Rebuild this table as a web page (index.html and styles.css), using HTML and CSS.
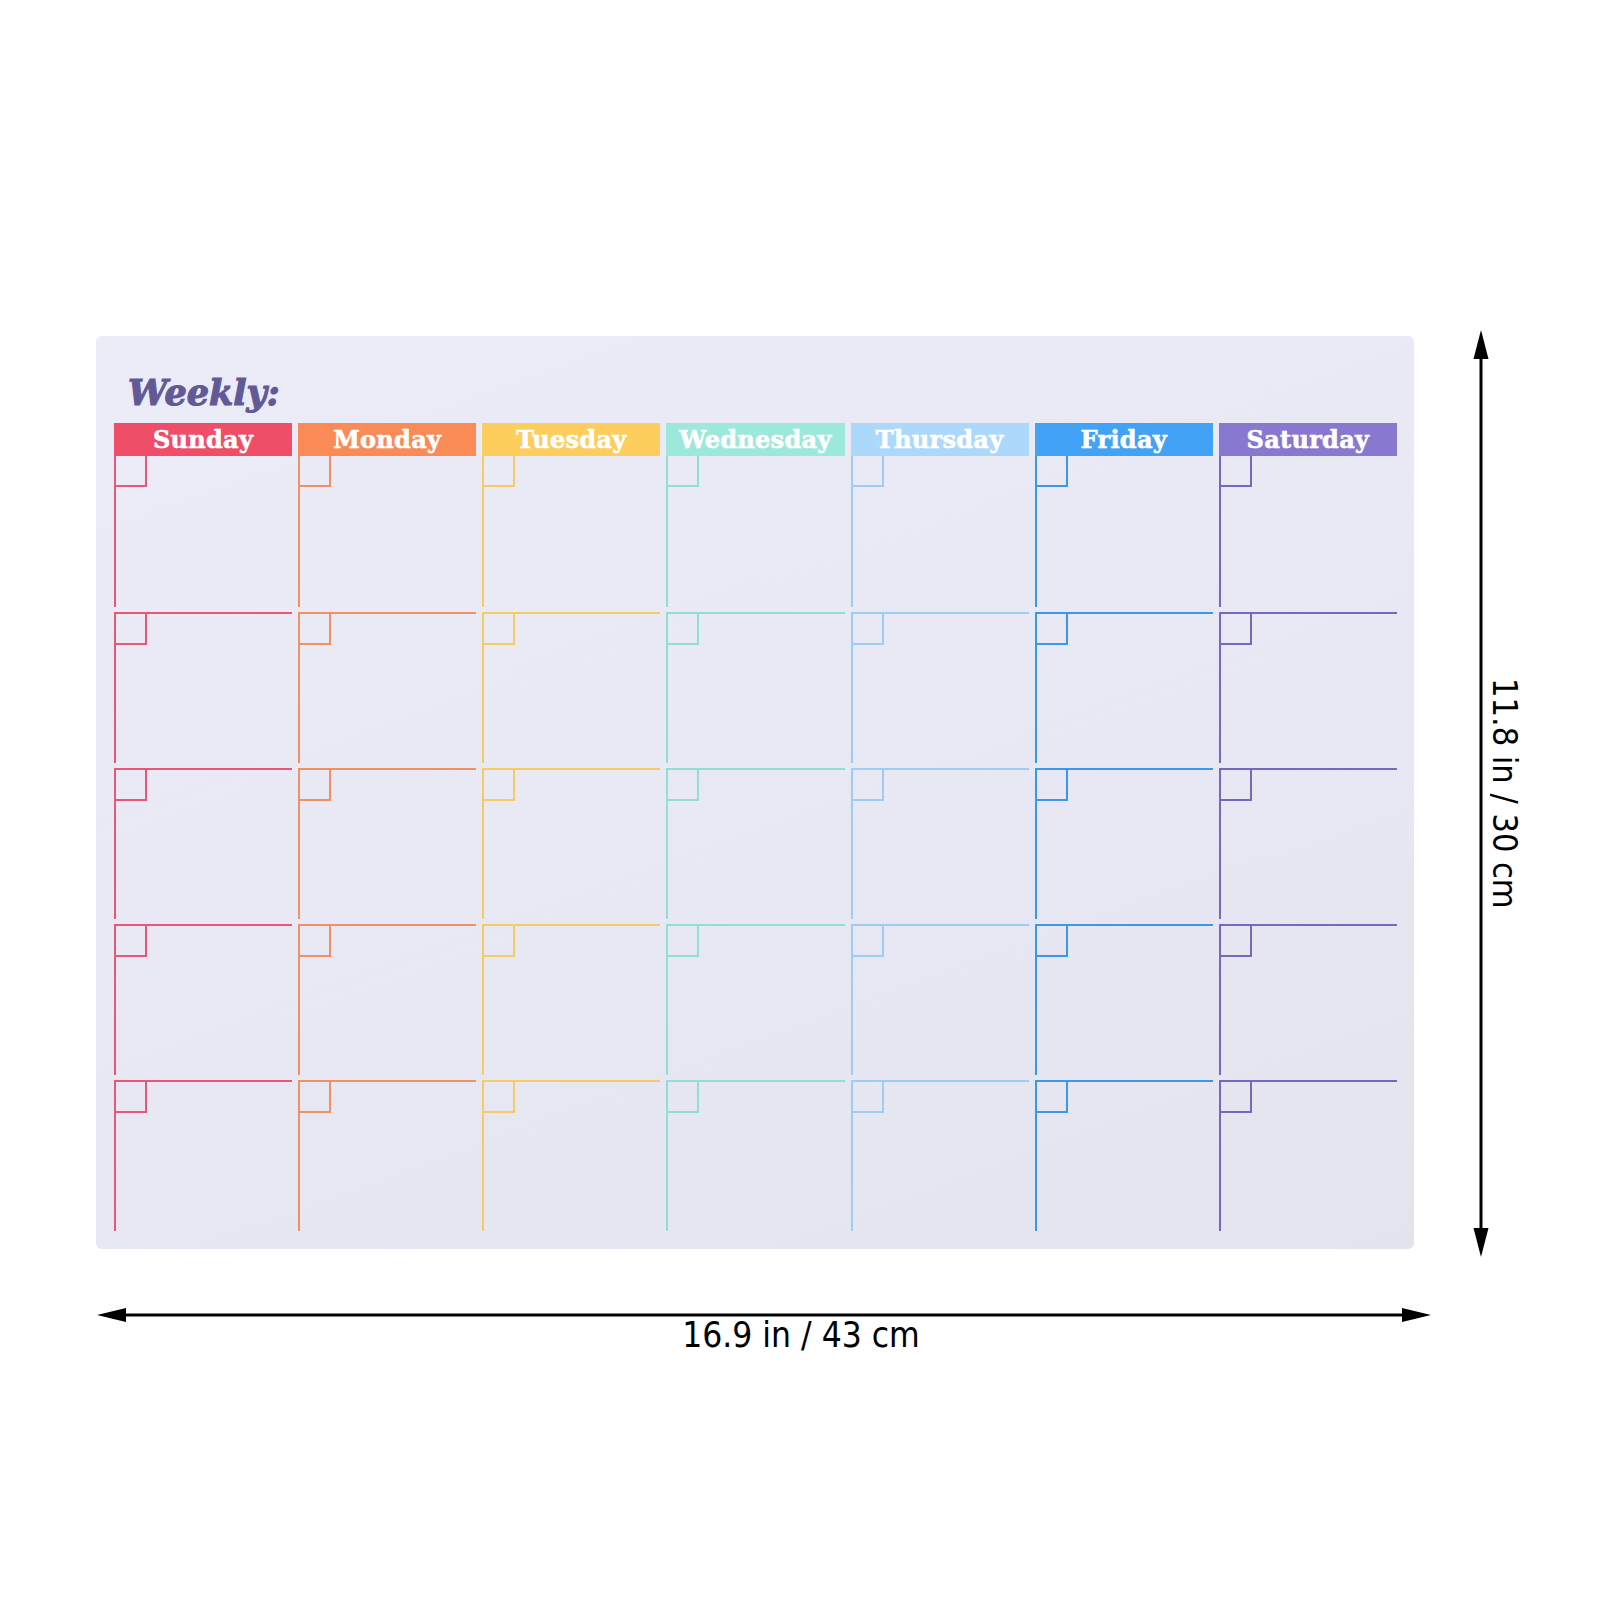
FILE: index.html
```html
<!DOCTYPE html>
<html>
<head>
    <title>Weekly Planner Board</title>
    <link rel="stylesheet" href="styles.css">
</head>
<body>

<div class="scene">
    <div class="top">
        <div class="board">
            <h1 class="title">Weekly:</h1>
            <div class="week">
                <div class="day sun">
                    <div class="day-name">Sunday</div>
                    <div class="slot"></div><div class="slot"></div><div class="slot"></div><div class="slot"></div><div class="slot"></div>
                </div>
                <div class="day mon">
                    <div class="day-name">Monday</div>
                    <div class="slot"></div><div class="slot"></div><div class="slot"></div><div class="slot"></div><div class="slot"></div>
                </div>
                <div class="day tue">
                    <div class="day-name">Tuesday</div>
                    <div class="slot"></div><div class="slot"></div><div class="slot"></div><div class="slot"></div><div class="slot"></div>
                </div>
                <div class="day wed">
                    <div class="day-name">Wednesday</div>
                    <div class="slot"></div><div class="slot"></div><div class="slot"></div><div class="slot"></div><div class="slot"></div>
                </div>
                <div class="day thu">
                    <div class="day-name">Thursday</div>
                    <div class="slot"></div><div class="slot"></div><div class="slot"></div><div class="slot"></div><div class="slot"></div>
                </div>
                <div class="day fri">
                    <div class="day-name">Friday</div>
                    <div class="slot"></div><div class="slot"></div><div class="slot"></div><div class="slot"></div><div class="slot"></div>
                </div>
                <div class="day sat">
                    <div class="day-name">Saturday</div>
                    <div class="slot"></div><div class="slot"></div><div class="slot"></div><div class="slot"></div><div class="slot"></div>
                </div>
            </div>
        </div>

        <!-- height arrow -->
        <div class="vdim">
            <svg class="arrow" width="16" height="927" viewBox="0 0 16 927">
                <line x1="8" y1="20" x2="8" y2="907" stroke="#000" stroke-width="3"/>
                <polygon points="8,0 0.5,29 15.5,29" fill="#000"/>
                <polygon points="8,927 0.5,898 15.5,898" fill="#000"/>
            </svg>
            <div class="vlabel">11.8 in / 30 cm</div>
        </div>
    </div>

    <!-- width arrow -->
    <div class="hdim">
        <svg class="arrow" width="1334" height="14" viewBox="0 0 1334 14">
            <line x1="20" y1="7" x2="1314" y2="7" stroke="#000" stroke-width="3"/>
            <polygon points="0,7 29,0 29,14" fill="#000"/>
            <polygon points="1334,7 1305,0 1305,14" fill="#000"/>
        </svg>
        <div class="hlabel">16.9 in / 43 cm</div>
    </div>
</div>

</body>
</html>
```

FILE: styles.css
```css
html,
body {
    margin: 0;
    background: #fff;
}

.scene {
    padding: 330px 0 0 96px;
    width: 1504px;
    height: 1270px;
}

.top {
    display: flex;
    align-items: flex-start;
}

/* the board itself */
.board {
    width: 1318px;
    height: 913px;
    margin-top: 6px;
    padding: 0 17px 0 18px;
    box-sizing: border-box;
    border-radius: 6px;
    background: linear-gradient(160deg, #ececf8 0%, #e9e9f6 45%, #e4e4ee 100%);
}

.title {
    margin: 0;
    height: 87px;
    padding: 0 0 13px 14px;
    box-sizing: border-box;
    display: flex;
    align-items: flex-end;
    font-family: "DejaVu Serif", serif;
    font-weight: bold;
    font-style: italic;
    font-size: 35px;
    line-height: 1;
    color: #615a96;
    -webkit-text-stroke: 1.2px #615a96;
}

.week {
    display: grid;
    grid-template-columns: repeat(7, 1fr);
    column-gap: 6px;
}

.day {
    display: flex;
    flex-direction: column;
}

.day-name {
    height: 33px;
    line-height: 33px;
    background: var(--bar);
    color: #fff;
    text-align: center;
    font-family: "DejaVu Serif", serif;
    font-weight: bold;
    font-size: 24px;
    letter-spacing: 0.3px;
    -webkit-text-stroke: 0.6px #fff;
}

.slot {
    height: 151px;
    border-left: 2px solid var(--line);
    box-sizing: border-box;
}

.slot + .slot {
    margin-top: 5px;
    height: 151px;
    border-top: 2px solid var(--line);
}

.slot::before {
    content: "";
    display: block;
    width: 29px;
    height: 29px;
    border-right: 2px solid var(--line);
    border-bottom: 2px solid var(--line);
}

.sun { --bar: #f04d69; --line: #e95777; }
.mon { --bar: #fb8b56; --line: #f39063; }
.tue { --bar: #fdcd5d; --line: #f6cb63; }
.wed { --bar: #9ce9db; --line: #90dfd2; }
.thu { --bar: #acd9fb; --line: #9ccef5; }
.fri { --bar: #41a2f6; --line: #3b97ea; }
.sat { --bar: #8878cf; --line: #7867be; }

/* dimension marks */
.vdim {
    display: flex;
    height: 927px;
    margin-left: 59px;
}

.vlabel {
    align-self: center;
    margin-left: -1px;
    writing-mode: vertical-rl;
    font-family: "DejaVu Sans Condensed", "DejaVu Sans", sans-serif;
    font-stretch: condensed;
    font-size: 34px;
    line-height: 1;
    color: #000;
}

.hdim {
    width: 1334px;
    margin: 51px 0 0 1px;
}

.arrow {
    display: block;
}

.hlabel {
    margin-top: -4px;
    padding-left: 74px;
    text-align: center;
    font-family: "DejaVu Sans Condensed", "DejaVu Sans", sans-serif;
    font-stretch: condensed;
    font-size: 35px;
    line-height: 1;
    color: #000;
}
```
